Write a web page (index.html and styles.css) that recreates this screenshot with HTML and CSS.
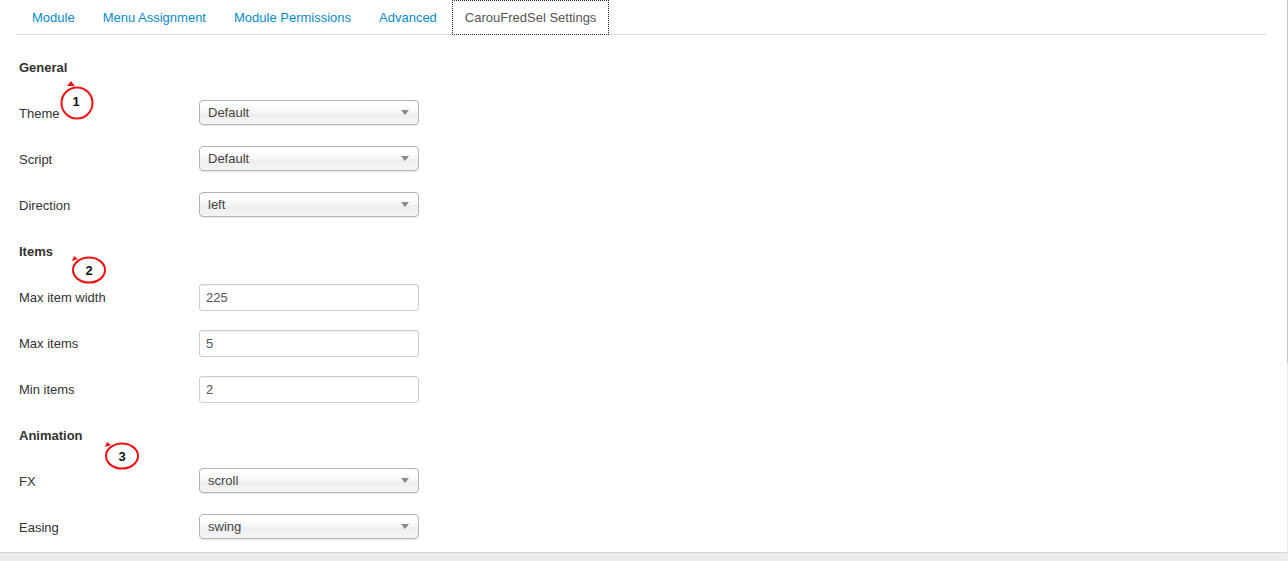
FILE: index.html
```html
<!DOCTYPE HTML>
<html>
<head>
    <meta charset="UTF-8">
    <title>CarouFredSel Settings</title>
    <link rel="stylesheet" href="styles.css">
</head>
<body>
    <div id="page">
        <ul class="tabs">
            <li><a href="#">Module</a></li>
            <li><a href="#">Menu Assignment</a></li>
            <li><a href="#">Module Permissions</a></li>
            <li><a href="#">Advanced</a></li>
            <li class="active"><a href="#">CarouFredSel Settings</a></li>
        </ul>

        <div class="form">
            <h4 class="legend">General</h4>
            <div class="row">
                <label>Theme</label>
                <div class="chzn"><span>Default</span><b></b></div>
            </div>
            <div class="row">
                <label>Script</label>
                <div class="chzn"><span>Default</span><b></b></div>
            </div>
            <div class="row">
                <label>Direction</label>
                <div class="chzn"><span>left</span><b></b></div>
            </div>

            <h4 class="legend">Items</h4>
            <div class="row">
                <label>Max item width</label>
                <input class="txt" type="text" value="225">
            </div>
            <div class="row">
                <label>Max items</label>
                <input class="txt" type="text" value="5">
            </div>
            <div class="row">
                <label>Min items</label>
                <input class="txt" type="text" value="2">
            </div>

            <h4 class="legend">Animation</h4>
            <div class="row">
                <label>FX</label>
                <div class="chzn"><span>scroll</span><b></b></div>
            </div>
            <div class="row">
                <label>Easing</label>
                <div class="chzn"><span>swing</span><b></b></div>
            </div>
        </div>

        <div class="footer"></div>

        <!-- red callouts drawn over the form -->
        <svg class="notes" width="1288" height="561" viewBox="0 0 1288 561">
            <g fill="none" stroke="#ee1111" stroke-width="2">
                <ellipse cx="77" cy="103" rx="15.5" ry="15.5"/>
                <ellipse cx="89" cy="270" rx="16" ry="12.5"/>
                <ellipse cx="122" cy="456" rx="16" ry="12.5"/>
            </g>
            <g fill="#ee1111">
                <polygon points="67,86 71,81 75,86"/>
                <polygon points="72,261 74,256 78,259"/>
                <polygon points="105,447 107,442 111,445"/>
            </g>
            <g font-family="'Liberation Sans', Arial, sans-serif" font-size="13" font-weight="bold" fill="#111" text-anchor="middle">
                <text x="76" y="106">1</text>
                <text x="89" y="275">2</text>
                <text x="122" y="461">3</text>
            </g>
        </svg>
    </div>
</body>
</html>
```

FILE: styles.css
```css
body{margin:0;font-family:"Liberation Sans",Arial,sans-serif;font-size:13px;color:#333;}
ul,li,h4{margin:0;padding:0;list-style:none;}

#page{
    position: relative;
    width: 1288px;
    height: 561px;
    overflow: hidden;
    background:
        linear-gradient(#c6c6c6,#c6c6c6) right top / 1px 363px no-repeat,
        linear-gradient(#ececec,#ececec) right top / 1px 100% no-repeat,
        #fff;
}

.tabs{
    display: flex;
    margin: 0 22px 0 16px;
    padding-left: 3px;
    border-bottom: 1px solid #ddd;
}
.tabs li{
    margin-bottom: -1px;
}
.tabs a{
    display: block;
    margin-right: 2px;
    padding: 8px 12px 7px;
    line-height: 18px;
    border: 1px solid transparent;
    color: #0a8ad0;
    text-decoration: none;
}
.tabs li.active a{
    color: #555;
    background: #fff;
    border: 1px dotted #222;
}

.form{
    padding: 9px 0 0 19px;
}
.form .legend{
    height: 46px;
    line-height: 48px;
    font-size: 13px;
    font-weight: bold;
}
.form .row{
    display: flex;
    align-items: center;
    height: 46px;
}
.form label{
    width: 180px;
}

.chzn{
    position: relative;
    box-sizing: border-box;
    width: 220px;
    height: 25px;
    margin-top: -2px;
    padding-left: 8px;
    line-height: 24px;
    color: #444;
    border: 1px solid #b4b4b4;
    border-radius: 4px;
    background: linear-gradient(#fff 20%, #f6f6f6 50%, #eee 52%, #f4f4f4 100%);
    box-shadow: 0 1px 1px rgba(0,0,0,.1);
}
.chzn b{
    position: absolute;
    right: 9px;
    top: 9px;
    width: 0;
    height: 0;
    border-left: 4px solid transparent;
    border-right: 4px solid transparent;
    border-top: 5px solid #8a8a8a;
}

.txt{
    box-sizing: border-box;
    width: 220px;
    height: 27px;
    margin: 0;
    padding: 0 6px;
    font: 13px "Liberation Sans",Arial,sans-serif;
    color: #555;
    border: 1px solid #ccc;
    border-radius: 3px;
    box-shadow: inset 0 1px 1px rgba(0,0,0,.06);
}

.footer{
    width: 1287px;
    height: 8px;
    margin-top: 2px;
    border-top: 1px solid #d6d6d6;
    background: #ececec;
}

.notes{
    position: absolute;
    left: 0;
    top: 0;
    pointer-events: none;
}
```
